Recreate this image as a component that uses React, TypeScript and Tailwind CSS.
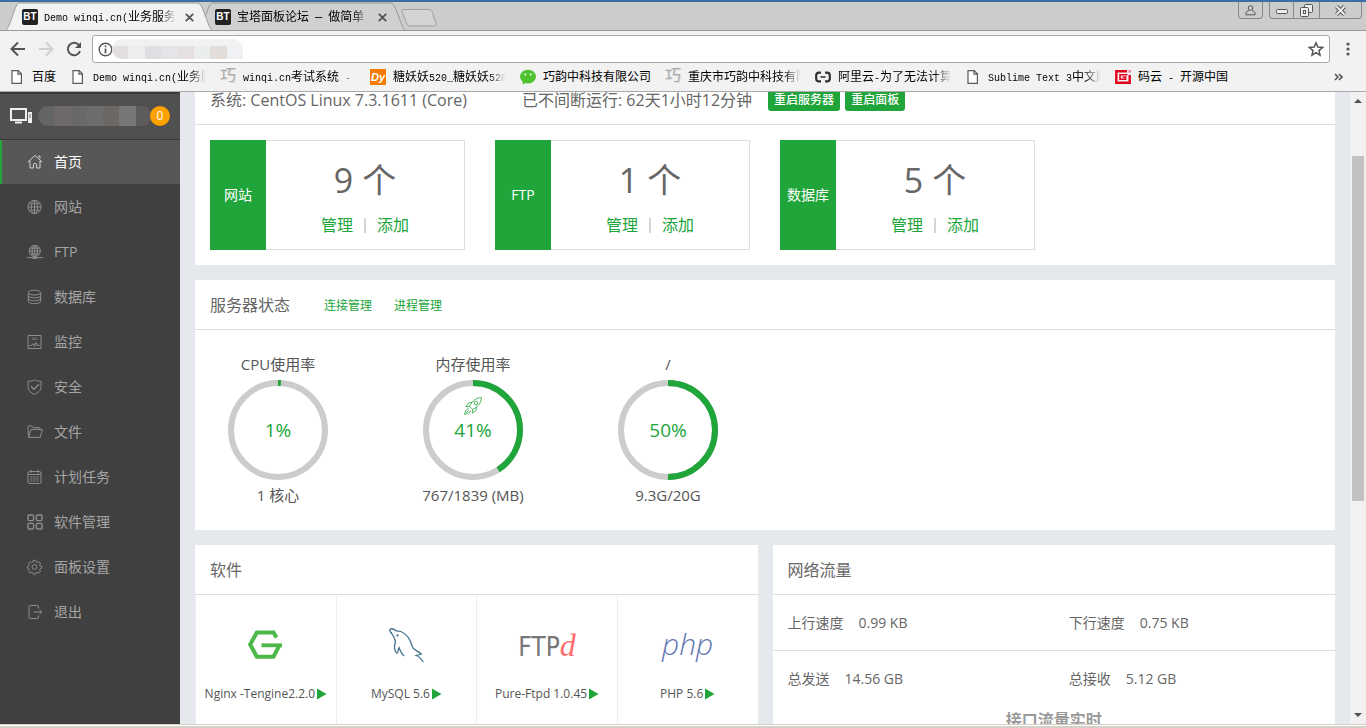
import { ReactNode } from 'react';

const UI_FONT = "font-['Open_Sans','Noto_Sans_CJK_SC',sans-serif]";

// Browser chrome labels: narrow mono latin next to 12px Chinese
const ChromeText = ({ text }: { text: string }) => (
  <>
    {text.split(/([\u3400-\u9fff—]+)/).map((part, i) =>
      i % 2 ? (
        <span key={i} className="text-[12px]">
          {part}
        </span>
      ) : (
        <span key={i} className="whitespace-pre text-[10px]">
          {part}
        </span>
      ),
    )}
  </>
);

/* ---------- small icons ---------- */

const FileIcon = () => (
  <svg width="16" height="16" viewBox="0 0 16 16" fill="#fff" stroke="#5a5a5a" strokeWidth="1.2">
    <path d="M3 1.6h6.2l3.2 3.2v9.6H3z" />
    <path d="M9 1.8v3.3h3.3" fill="none" />
  </svg>
);

const QiaoIcon = () => (
  <span className="block w-4 text-[16px] leading-4 text-[#a9a9a9] [text-shadow:1px_1px_1px_#ddd]">
    巧
  </span>
);

const DyIcon = () => (
  <span className="block size-4 bg-[#f57c00] text-center font-['Liberation_Sans',sans-serif] text-[11px] leading-4 font-bold text-white italic">
    Dy
  </span>
);

const WechatIcon = () => (
  <svg width="16" height="16" viewBox="0 0 16 16">
    <ellipse cx="8" cy="7.6" rx="8" ry="6.8" fill="#4fc32f" />
    <path d="M3 12l-.6 3.4L6 13.8z" fill="#4fc32f" />
    <circle cx="5.3" cy="5.4" r="1" fill="#fff" />
    <circle cx="10.7" cy="5.4" r="1" fill="#fff" />
  </svg>
);

const AliyunIcon = () => (
  <svg width="16" height="16" viewBox="0 0 16 16" fill="none" stroke="#333" strokeWidth="2.2">
    <path d="M6 3.6H4Q1.200 3.600 1.200 6.200v3.600q0 2.600 2.800 2.600h2M10 3.600H12q2.800 0 2.800 2.600v3.600q0 2.600-2.800 2.600H10" />
    <path d="M5.500 8h5" strokeWidth="1.600" />
  </svg>
);

const GiteeIcon = () => (
  <svg width="16" height="16" viewBox="0 0 16 16" fill="none" stroke="#e2001a" strokeWidth="2.4">
    <path d="M12 2.200H1.300v11.600h13.400V6" />
    <path d="M12.500 5.800H5v4.500h5.600V8H7.500" strokeWidth="1.600" />
    <path d="M14.700 1v2.600" stroke="#f08090" />
  </svg>
);

const bookmarks = [
  { label: '百度', icon: <FileIcon />, cut: false },
  { label: 'Demo winqi.cn(业务服', icon: <FileIcon />, cut: true },
  { label: 'winqi.cn考试系统 - ', icon: <QiaoIcon />, cut: true },
  { label: '糖妖妖520_糖妖妖520', icon: <DyIcon />, cut: true },
  { label: '巧韵中科技有限公司', icon: <WechatIcon />, cut: false },
  { label: '重庆市巧韵中科技有限', icon: <QiaoIcon />, cut: true },
  { label: '阿里云-为了无法计算', icon: <AliyunIcon />, cut: true },
  { label: 'Sublime Text 3中文版', icon: <FileIcon />, cut: true },
  { label: '码云 - 开源中国', icon: <GiteeIcon />, cut: false },
];

const menuItems: { label: string; icon: ReactNode }[] = [
  {
    label: '首页',
    icon: (
      <>
        <path d="M.8 8.2L8 1.4l7.2 6.8" />
        <path d="M3 6.8V14h3.4v-3.2q0-1.4 1.6-1.4t1.6 1.4V14H13V6.8M11 2.2h2v2.4" />
      </>
    ),
  },
  {
    label: '网站',
    icon: (
      <>
        <circle cx="7.5" cy="8" r="6.6" />
        <ellipse cx="7.5" cy="8" rx="3.2" ry="6.6" />
        <path d="M1 8h13M7.5 1.4v13.2M2 4.8h11M2 11.2h11" />
      </>
    ),
  },
  {
    label: 'FTP',
    icon: (
      <>
        <circle cx="7.8" cy="7" r="5.6" />
        <ellipse cx="7.8" cy="7" rx="2.7" ry="5.6" />
        <path d="M2.2 7h11.2M7.8 1.4v13M3.2 4.2h9.2M3.2 9.8h9.2" />
        <path d="M0 13.6h16M5.8 14.4h4" />
      </>
    ),
  },
  {
    label: '数据库',
    icon: (
      <>
        <ellipse cx="7.5" cy="3.6" rx="6.2" ry="2.4" />
        <path d="M1.3 3.6v8.8c0 3 12.4 3 12.4 0V3.6M1.3 6.6c0 3 12.4 3 12.4 0M1.3 9.5c0 3 12.4 3 12.4 0" />
      </>
    ),
  },
  {
    label: '监控',
    icon: (
      <>
        <path d="M1 1.5h13v13H1z" />
        <path d="M4.5 4h6M4.5 5.5h6" strokeOpacity=".6" />
        <path d="M2.5 11.5h2l1.5-2 1.5 3 1.5-4 1.2 3h2.6" />
      </>
    ),
  },
  {
    label: '安全',
    icon: (
      <>
        <path d="M7.5.8C9 2 11.5 2.3 14 2.2v5.3c0 4-3 6.4-6.5 7.8C4 13.9 1 11.5 1 7.5V2.2C3.5 2.3 6 2 7.5.8z" />
        <path d="M4 7.3l3 3 5-5" strokeWidth="1.4" />
      </>
    ),
  },
  {
    label: '文件',
    icon: <path d="M1.5 13.4L1 3q0-1 1-1h3l1.200 1.600H12q1 0 1 1v.8M1.500 13.400L4 5.400h11.200l-2 8z" />,
  },
  {
    label: '计划任务',
    icon: (
      <>
        <rect x="1" y="2.5" width="13" height="12" rx="1.5" />
        <path d="M1 5.5h13M4 1v3M11 1v3" />
        <path d="M3.5 8h8M3.5 10h8M3.5 12h8" strokeDasharray="2 1" />
      </>
    ),
  },
  {
    label: '软件管理',
    icon: (
      <g strokeWidth="1.4">
        <rect x="1" y="1" width="5.6" height="5.6" rx="1" />
        <rect x="9.4" y="1" width="5.6" height="5.6" rx="1" />
        <rect x="1" y="9.4" width="5.6" height="5.6" rx="1" />
        <rect x="9.4" y="9.4" width="5.6" height="5.6" rx="1" />
      </g>
    ),
  },
  {
    label: '面板设置',
    icon: (
      <>
        <circle cx="7.5" cy="8" r="2.4" />
        <path d="M6.3 1.3h2.4l.4 1.7 1.3.5 1.5-.9 1.6 1.7-.9 1.5.5 1.2 1.5.4v1.9l-1.5.4-.5 1.3.9 1.5-1.6 1.6-1.5-.9-1.3.5-.4 1.5H6.3l-.4-1.5-1.3-.5-1.5.9-1.6-1.6.9-1.5-.5-1.3-1.4-.4V7.4l1.4-.4.5-1.2-.9-1.5 1.6-1.7 1.5.9 1.3-.5z" />
      </>
    ),
  },
  {
    label: '退出',
    icon: (
      <>
        <path d="M11.5 4.5V2.5q0-1-1-1h-7q-1.5 0-1.5 1.5v10q0 1.5 1.5 1.5h7q1 0 1-1v-2" />
        <path d="M6.5 8h8M12.5 6l2.3 2-2.3 2" />
      </>
    ),
  },
];

/* ---------- browser chrome ---------- */

const Tab = ({ title, active }: { title: string; active?: boolean }) => (
  <div className={`relative flex h-7 w-[206px] items-center pt-[2px] pr-[15px] pl-4 ${active ? 'z-10' : '-ml-[13px]'}`}>
    <svg className="absolute inset-0" width="206" height="28" viewBox="0 0 206 28">
      <path
        d="M0 28C4 26 9 1 13 1H192C197 1 202 26 206 28"
        fill={active ? '#f2f2f2' : '#d0d0d0'}
        stroke="#999"
      />
    </svg>
    <span className="relative size-4 shrink-0 rounded-[2px] bg-[#222] text-center font-['Liberation_Sans',sans-serif] text-[10px] leading-4 font-bold text-white">
      BT
    </span>
    <span className="relative ml-[6px] h-4 w-[132px] overflow-hidden leading-4 whitespace-nowrap [mask-image:linear-gradient(to_right,#000_88%,transparent)]">
      <ChromeText text={title} />
    </span>
    <button aria-label="关闭标签页" className="relative ml-auto flex size-4 items-center justify-center">
      <svg width="9" height="9" viewBox="0 0 9 9" stroke="#555" strokeWidth="1.8">
        <path d="M.8.8l7.4 7.4M8.2.8L.8 8.2" />
      </svg>
    </button>
  </div>
);

const TabStrip = () => (
  <div className="relative flex h-[29px] items-end border-b border-[#999] bg-[#ccc] pl-[6px]">
    <Tab title="Demo winqi.cn(业务服务" active />
    <Tab title="宝塔面板论坛 — 做简单" />
    <button aria-label="新标签页" className="mb-[3px] -ml-1">
      <svg width="36" height="18" viewBox="0 0 36 18" fill="#d3d3d3" stroke="#a0a0a0">
        <path d="M2 .5h26q2 0 3 2l4 12q.5 2.500-1.500 2.500H9q-2 0-3-2L1 2.500Q.5.5 2 .5z" />
      </svg>
    </button>
    <div className="ml-auto flex self-start pr-1">
      <button
        aria-label="用户"
        className="mr-[6px] flex h-[17px] w-[25px] items-center justify-center rounded-b border border-t-0 border-[#888]"
      >
        <svg width="11" height="11" viewBox="0 0 11 11" fill="none" stroke="#555">
          <circle cx="5.5" cy="3" r="2.3" />
          <path d="M3.8 5L1 7.5v2.300h9V7.500L7.200 5" />
        </svg>
      </button>
      <button
        aria-label="最小化"
        className="flex h-[17px] w-[25px] items-center justify-center rounded-bl border border-t-0 border-[#888] pt-1"
      >
        <svg width="12" height="6" viewBox="0 0 12 6" fill="#eee" stroke="#555">
          <rect x=".5" y=".5" width="11" height="4" rx="1" />
        </svg>
      </button>
      <button aria-label="还原" className="flex h-[17px] w-[25px] items-center justify-center border-b border-[#888]">
        <svg width="13" height="13" viewBox="0 0 13 13" fill="#eee" stroke="#555">
          <rect x="4.5" y=".5" width="8" height="8" rx="1" />
          <rect x=".5" y="3.5" width="8" height="9" rx="1" />
          <rect x="3.5" y="6.5" width="2" height="3" />
        </svg>
      </button>
      <button
        aria-label="关闭"
        className="flex h-[17px] w-[43px] items-center justify-center rounded-br border border-t-0 border-[#888]"
      >
        <svg width="13" height="11" viewBox="0 0 13 11">
          <path d="M2.5 1.5l8 8M10.5 1.5l-8 8" stroke="#555" strokeWidth="4" />
          <path d="M2.5 1.5l8 8M10.5 1.5l-8 8" stroke="#eee" strokeWidth="2" />
        </svg>
      </button>
    </div>
  </div>
);

const Toolbar = () => (
  <div className="flex h-[36px] items-center bg-[#f2f2f2] pl-[10px]">
    <button aria-label="后退" className="mr-3">
      <svg width="16" height="16" viewBox="0 0 16 16" fill="none" stroke="#555" strokeWidth="2">
        <path d="M15 8H2M8 1.5L1.5 8 8 14.5" />
      </svg>
    </button>
    <button aria-label="前进" className="mr-3">
      <svg width="16" height="16" viewBox="0 0 16 16" fill="none" stroke="#d0d0d0" strokeWidth="2">
        <path d="M1 8h13M8 1.5L14.5 8 8 14.5" />
      </svg>
    </button>
    <button aria-label="重新加载" className="mr-[10px]">
      <svg width="16" height="16" viewBox="0 0 16 16" fill="none" stroke="#555" strokeWidth="2">
        <path d="M13 4.2A6.2 6.2 0 1 0 14 10" />
        <path d="M15 1v6H9z" fill="#555" stroke="none" />
      </svg>
    </button>
    <div className="flex h-7 flex-1 items-center rounded-[3px] border border-[#a9a9a9] bg-white px-[5px]">
      <svg width="15" height="15" viewBox="0 0 15 15" fill="none" stroke="#555">
        <circle cx="7.5" cy="7.5" r="6.3" strokeWidth="1.4" />
        <path d="M7.5 6.5v5M7.5 3.5v1.8" strokeWidth="1.7" />
      </svg>
      <div className="-ml-px h-5 w-[131px] overflow-hidden rounded-l-full rounded-tr-full bg-[#f1f1f1] pt-[7px]">
        <div className="grid h-full grid-cols-8">
          <span className="bg-[#e3dedf]" />
          <span className="bg-[#eeecec]" />
          <span className="bg-[#dfdfe3]" />
          <span className="bg-[#e5e5e9]" />
          <span className="bg-[#e5dfe0]" />
          <span className="bg-[#e9edec]" />
          <span className="bg-[#e2ddd9]" />
          <span className="bg-[#eff1f4]" />
        </div>
      </div>
      <input type="text" aria-label="地址栏" className="min-w-0 flex-1 text-[12px] outline-none" />
      <button aria-label="收藏">
        <svg width="16" height="16" viewBox="0 0 16 16" fill="none" stroke="#555" strokeWidth="1.5">
          <path d="M8 1.8l1.8 4.3 4.7.4-3.5 3.1 1 4.6L8 11.7l-4 2.5 1-4.6L1.5 6.5l4.7-.4z" />
        </svg>
      </button>
    </div>
    <button aria-label="菜单" className="mx-4">
      <svg width="4" height="14" viewBox="0 0 4 14" fill="#555">
        <circle cx="2" cy="2" r="1.6" />
        <circle cx="2" cy="7" r="1.6" />
        <circle cx="2" cy="12" r="1.6" />
      </svg>
    </button>
  </div>
);

const BookmarkBar = () => (
  <div className="flex h-[25px] items-center gap-[14px] border-b border-[#aaa] bg-[#f2f2f2] pb-1 pl-[9px]">
    {bookmarks.map((b) => (
      <a key={b.label} href="#" className="flex shrink-0 items-center gap-[7px] text-black">
        {b.icon}
        <span
          className={`h-4 overflow-hidden leading-4 whitespace-nowrap ${
            b.cut ? 'w-[113px] [mask-image:linear-gradient(to_right,#000_85%,transparent)]' : ''
          }`}
        >
          <ChromeText text={b.label} />
        </span>
      </a>
    ))}
    <button aria-label="更多书签" className="mr-[23px] ml-auto">
      <svg width="9" height="8" viewBox="0 0 9 8" fill="none" stroke="#555" strokeWidth="1.6">
        <path d="M1 1l3 3-3 3M5 1l3 3-3 3" />
      </svg>
    </button>
  </div>
);

/* ---------- panel ---------- */

const Sidebar = () => (
  <aside className="w-[180px] shrink-0 bg-[#404040]">
    <div className="flex h-[48px] items-center border-t-2 border-b border-t-[#3a3a3a] border-b-[#383838] bg-[#505050] pb-[2px] pl-[10px]">
      <svg width="23" height="16" viewBox="0 0 23 16">
        <rect x="1" y="1" width="15" height="11" fill="none" stroke="#eee" strokeWidth="2" />
        <path d="M5 14.5h7" stroke="#eee" strokeWidth="2" />
        <rect x="18" y="4" width="4" height="11" fill="#eee" />
        <path d="M19 7h2M19 9h2" stroke="#666" />
      </svg>
      <div className="mr-[-2px] ml-[5px] grid h-[20px] w-[114px] grid-cols-7 overflow-hidden rounded-full">
        <span className="bg-[#646565]" />
        <span className="bg-[#6f6a69]" />
        <span className="bg-[#696969]" />
        <span className="bg-[#6d6d6d]" />
        <span className="bg-[#6b6765]" />
        <span className="bg-[#777]" />
        <span className="bg-[#5e5c5a]" />
      </div>
      <span className="size-5 rounded-full bg-[#ffa200] text-center text-[12px] leading-5 text-white">0</span>
    </div>
    <nav>
      {menuItems.map((item, i) => (
        <a
          key={item.label}
          href="#"
          className={`mb-px flex h-11 items-center gap-[10px] border-l-2 pl-[25px] text-[14px] ${
            i === 0 ? 'border-[#20a53a] bg-[#575757] text-white' : 'border-transparent text-[#a5a5a5]'
          }`}
        >
          <svg
            width="17"
            height="16"
            viewBox="0 0 17 16"
            fill="none"
            stroke={i === 0 ? '#d5d5d5' : '#8e8e8e'}
            strokeWidth="1"
          >
            {item.icon}
          </svg>
          <span className="pb-[2px]">{item.label}</span>
        </a>
      ))}
    </nav>
  </aside>
);

const counters = [
  { name: '网站', count: 9 },
  { name: 'FTP', count: 1 },
  { name: '数据库', count: 5 },
];

const SystemPanel = () => (
  <section className="bg-white">
    <div className="flex h-[50px] items-center border-b border-[#ddd] px-[15px] text-[16px]">
      <span className="w-[312px] whitespace-nowrap">系统: CentOS Linux 7.3.1611 (Core)</span>
      <span className="mr-4 whitespace-nowrap">已不间断运行: 62天1小时12分钟</span>
      <button className="mr-[5px] h-[22px] rounded-[3px] bg-[#20a53a] px-[6px] text-[12px] font-medium text-white">
        重启服务器
      </button>
      <button className="h-[22px] rounded-[3px] bg-[#20a53a] px-[6px] text-[12px] font-medium text-white">
        重启面板
      </button>
    </div>
    <div className="flex gap-[30px] p-[15px]">
      {counters.map((c) => (
        <div key={c.name} className="flex h-[110px] w-[255px]">
          <div className="flex w-14 items-center justify-center bg-[#20a53a] pb-[2px] text-[14px] text-white">
            {c.name}
          </div>
          <div className="flex flex-1 flex-col items-center border border-l-0 border-[#ddd] pt-[15px]">
            <div className="text-[34px] leading-[48px]">{c.count} 个</div>
            <div className="mt-[9px] flex items-center gap-[11px] text-[16px] leading-6 text-[#20a53a]">
              <a href="#">管理</a>
              <span className="h-[15px] w-[2px] bg-[#d5d5d5]" />
              <a href="#">添加</a>
            </div>
          </div>
        </div>
      ))}
    </div>
  </section>
);

const gauges = [
  { title: 'CPU使用率', value: 1, detail: '1 核心' },
  { title: '内存使用率', value: 41, detail: '767/1839 (MB)', rocket: true },
  { title: '/', value: 50, detail: '9.3G/20G' },
];

const Gauge = ({ value, rocket }: { value: number; rocket?: boolean }) => (
  <div className="relative flex size-[100px] items-center justify-center">
    <svg className="absolute inset-0 -rotate-90" width="100" height="100" viewBox="0 0 100 100" fill="none">
      <circle cx="50" cy="50" r="47" stroke="#ccc" strokeWidth="6" />
      <circle
        cx="50"
        cy="50"
        r="47"
        stroke="#20a53a"
        strokeWidth="6"
        pathLength="100"
        strokeDasharray={`${value} 100`}
      />
    </svg>
    {rocket && (
      <svg
        className="absolute top-[17px] left-[41px]"
        width="18"
        height="18"
        viewBox="0 0 18 18"
        fill="none"
        stroke="#20a53a"
        strokeWidth=".8"
      >
        <path d="M17.4.6C12 .8 8.6 3.5 5.5 9.3l3.2 3.2C14.5 9.5 17.2 6 17.4.6z" />
        <circle cx="12" cy="6" r="1.8" />
        <path d="M8 5.5L4.5 6 1.8 9.8l3.7-.5M12.5 10l-.5 3.5-3.8 2.7.5-3.7M4.500 11.500C2 12 1.500 14 .6 17.400 4 16.500 6 16 6.500 13.500M4.500 13.500l-2 2" />
      </svg>
    )}
    <span className="relative text-[19px] text-[#20a53a]">{value}%</span>
  </div>
);

const StatusPanel = () => (
  <section className="mt-[15px] h-[250px] bg-white">
    <div className="flex h-[50px] items-center border-b border-[#ddd] px-[15px]">
      <h2 className="text-[16px]">服务器状态</h2>
      <a href="#" className="ml-[34px] pt-[2px] text-[12px] text-[#20a53a]">
        连接管理
      </a>
      <a href="#" className="ml-[22px] pt-[2px] text-[12px] text-[#20a53a]">
        进程管理
      </a>
    </div>
    <div className="flex gap-[85px] pt-5 pl-7 text-[15px] leading-7 text-[#555]">
      {gauges.map((g) => (
        <div key={g.title} className="flex w-[110px] flex-col items-center whitespace-nowrap">
          <span className="mb-[2px]">{g.title}</span>
          <Gauge value={g.value} rocket={g.rocket} />
          <span className="mt-px">{g.detail}</span>
        </div>
      ))}
    </div>
  </section>
);

const software = [
  {
    name: 'Nginx -Tengine2.2.0',
    logo: (
      <svg width="35" height="30" viewBox="0 0 35 30" fill="none" stroke="#4cb848" strokeWidth="4">
        <path d="M28.5 7.5L25.5 2.5H8.8L2.2 14.5l6.6 12.3h16.6L31.5 15.3" />
        <path d="M13.5 15.3H34" strokeWidth="3.8" />
      </svg>
    ),
  },
  {
    name: 'MySQL 5.6',
    logo: (
      <svg width="35" height="35" viewBox="0 0 35 35" fill="none" stroke="#44758f" strokeWidth="1.3">
        <path d="M3 5.5C1 4 .4 2.5 1.2 1.2 3 .2 5 1 7 2.8 14 2.5 19 8 21.3 13c1 3 2 6 3 7.5 3 2.5 6 3.5 8 5.500l-5 1.500c3 1 5 3.500 7 6.500" />
        <path d="M1.2 3.5C3 6 4.5 8 5.5 10.5c1 2 1.500 3.500 0 7 0 4 .5 7 2.500 7.500 1.500 0 .8-3.500 2-5.500 1 2 1.500 6 5.200 8.500" />
        <circle cx="8.5" cy="7.5" r=".5" />
      </svg>
    ),
  },
  {
    name: 'Pure-Ftpd 1.0.45',
    logo: (
      <span className="flex items-baseline pt-px leading-8 text-[#777]">
        <span className="font-['DejaVu_Sans_Condensed','Open_Sans',sans-serif] text-[26px]">FTP</span>
        <span className="font-['Liberation_Serif',serif] text-[32px] text-[#ff6b6b] italic">d</span>
      </span>
    ),
  },
  {
    name: 'PHP 5.6',
    logo: <span className="pb-[2px] text-[30px] leading-8 font-light text-[#6075b4] italic">php</span>,
  },
];

const SoftwarePanel = () => (
  <section className="bg-white">
    <h2 className="flex h-[50px] items-center border-b border-[#ddd] px-[15px] text-[16px]">软件</h2>
    <div className="grid h-[140px] grid-cols-4">
      {software.map((s) => (
        <a
          key={s.name}
          href="#"
          className="flex flex-col items-center border-l border-[#ececf6] pt-[30px] text-[12px] text-[#555]"
        >
          <span className="flex h-10 items-center">{s.logo}</span>
          <span className="mt-[19px] flex items-center leading-5 whitespace-nowrap">
            {s.name}
            <svg width="12" height="12" viewBox="0 0 12 12" fill="#20a53a">
              <path d="M2 .5L11.5 6 2 11.500z" />
            </svg>
          </span>
        </a>
      ))}
    </div>
  </section>
);

const traffic = [
  [
    ['上行速度', '0.99 KB'],
    ['下行速度', '0.75 KB'],
  ],
  [
    ['总发送', '14.56 GB'],
    ['总接收', '5.12 GB'],
  ],
];

const TrafficPanel = () => (
  <section className="bg-white text-[14px]">
    <h2 className="flex h-[50px] items-center border-b border-[#ddd] px-[15px] text-[16px]">网络流量</h2>
    {traffic.map((row, i) => (
      <div key={i} className={`grid h-14 grid-cols-2 items-center ${i === 0 ? 'border-b border-[#ddd]' : 'pb-px'}`}>
        {row.map(([label, value]) => (
          <div key={label} className="pl-[15px]">
            <span className="mr-[15px]">{label}</span>
            {value}
          </div>
        ))}
      </div>
    ))}
    <h3 className="pt-px text-center text-[16px] leading-6 font-bold text-[#999]">接口流量实时</h3>
  </section>
);

const Scrollbar = () => (
  <div className="flex w-4 shrink-0 flex-col items-center bg-[#f1f1f1]">
    <svg className="shrink-0" width="16" height="18" viewBox="0 0 16 18" fill="#505050">
      <path d="M4 11l4-4 4 4z" />
    </svg>
    <div className="mt-[46px] h-6/11 w-3 bg-[#c1c1c1]" />
    <svg className="mt-auto shrink-0" width="16" height="18" viewBox="0 0 16 18" fill="#505050">
      <path d="M4 7l4 4 4-4z" />
    </svg>
  </div>
);

export default function App() {
  return (
    <div className={`flex h-screen flex-col overflow-hidden bg-[#e5e9ee] text-[#666] ${UI_FONT}`}>
      <header className="shrink-0 font-['Liberation_Mono','Noto_Sans_CJK_SC',monospace] text-black">
        <div className="h-[2px] bg-[#3a6ea5]" />
        <TabStrip />
        <Toolbar />
        <BookmarkBar />
      </header>
      <div className="flex min-h-0 flex-1">
        <Sidebar />
        <main className="min-w-0 flex-1 overflow-hidden px-[15px]">
          {/* page is scrolled, the first header sits partly under the toolbar */}
          <div className="-mt-[17px]">
            <SystemPanel />
            <StatusPanel />
            <div className="mt-[15px] grid grid-cols-2 gap-[15px]">
              <SoftwarePanel />
              <TrafficPanel />
            </div>
          </div>
        </main>
        <Scrollbar />
      </div>
      <div className="h-1 shrink-0 border-t border-b-2 border-[#d4d0c8] bg-white" />
    </div>
  );
}
